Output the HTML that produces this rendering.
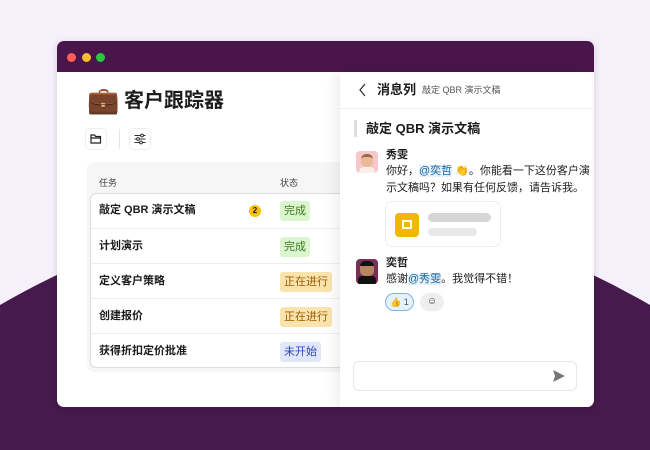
<!DOCTYPE html>
<html><head><meta charset="utf-8"><style>
*{margin:0;padding:0;box-sizing:border-box}
body{width:650px;height:450px;overflow:hidden;background:#f6f0fb;position:relative;font-family:"Liberation Sans","Noto Sans CJK SC",sans-serif;color:#1d1c1d}
.abs{position:absolute}
.win{left:57px;top:41px;width:537px;height:366px;background:#fff;border-radius:7px;overflow:hidden;box-shadow:0 2px 8px rgba(0,0,0,.15)}
.tb{left:0;top:0;width:537px;height:31px;background:#4a154b}
.dot{width:9px;height:9px;border-radius:50%;top:12px}
.row{left:34px;width:266px;height:35px;border-top:1px solid #eee;font-size:11px;font-weight:bold;line-height:35px;padding-left:8px}
.tag{position:absolute;left:189px;top:8px;height:20px;line-height:20px;padding:0 4px;font-size:11px;font-weight:normal;border-radius:3px}
.g{background:#dbf5cf;color:#3c7a1f}.y{background:#fbe3ad;color:#9a5b00}.b{background:#e1e6fb;color:#2f46b8}
.rp{left:283px;top:31px;width:252px;height:335px;background:#fff;box-shadow:-4px 0 14px rgba(0,0,0,.08);border-top-right-radius:6px}
.t{font-size:11px;line-height:17px;color:#1d1c1d;white-space:nowrap}
.m{color:#1264a3;background:#e8f3fb}
</style></head><body>
<svg class="abs" style="left:0;top:0" width="650" height="450"><path d="M0,305 Q325,117 650,305 L650,450 L0,450Z" fill="#461a4c"/></svg>
<div class="abs win">
 <div class="abs tb"></div>
 <div class="abs dot" style="left:10px;background:#ff5f57"></div>
 <div class="abs dot" style="left:25px;background:#febc2e"></div>
 <div class="abs dot" style="left:39px;background:#28c840"></div>
 <div class="abs" style="left:30px;top:44px;font-size:26px;line-height:30px">💼</div>
 <div class="abs" style="left:67px;top:47px;font-size:20px;font-weight:bold;line-height:26px">客户跟踪器</div>
 <div class="abs" style="left:28px;top:87px;width:22px;height:22px;border:1px solid #eee;border-radius:5px"><svg width="20" height="20" viewBox="0 0 20 20"><path d="M5 6h3.5l1.2 1.5h4.8v6.5h-9.5z M5 9h9.5" fill="none" stroke="#222" stroke-width="1.2"/></svg></div>
 <div class="abs" style="left:62px;top:88px;width:1px;height:20px;background:#e5e5e5"></div>
 <div class="abs" style="left:72px;top:87px;width:22px;height:22px;border:1px solid #eee;border-radius:5px"><svg width="20" height="20" viewBox="0 0 20 20"><path d="M4.5 6.5h11M4.5 10h11M4.5 13.5h11" stroke="#333" stroke-width="1"/><circle cx="12" cy="6.5" r="1.4" fill="#fff" stroke="#333"/><circle cx="8" cy="10" r="1.4" fill="#fff" stroke="#333"/><circle cx="11" cy="13.5" r="1.4" fill="#fff" stroke="#333"/></svg></div>
 <div class="abs" style="left:30px;top:121px;width:270px;height:210px;background:#f6f6f6;border-radius:7px"></div>
 <div class="abs" style="left:42px;top:135px;font-size:9px;color:#444">任务</div>
 <div class="abs" style="left:223px;top:135px;font-size:9px;color:#444">状态</div>
 <div class="abs" style="left:33px;top:152px;width:267px;height:175px;background:#fff;border:1px solid #ddd;border-radius:6px"></div>
 <div class="abs row" style="top:152px;border-top:none">敲定 QBR 演示文稿<span style="position:absolute;left:158px;top:12px;width:12px;height:12px;border-radius:50%;background:#f7c300;font-size:8px;line-height:12px;text-align:center">2</span><span class="tag g">完成</span></div>
 <div class="abs row" style="top:187px">计划演示<span class="tag g">完成</span></div>
 <div class="abs row" style="top:222px">定义客户策略<span class="tag y">正在进行</span></div>
 <div class="abs row" style="top:257px">创建报价<span class="tag y">正在进行</span></div>
 <div class="abs row" style="top:292px">获得折扣定价批准<span class="tag b">未开始</span></div>
 <div class="abs rp">
  <svg class="abs" style="left:18px;top:11px" width="10" height="14"><path d="M7 1L2 7l5 6" fill="none" stroke="#333" stroke-width="1.3"/></svg>
  <div class="abs" style="left:37px;top:9px;font-size:13px;font-weight:bold;line-height:18px">消息列</div>
  <div class="abs" style="left:82px;top:12px;font-size:9px;color:#555;line-height:12px">敲定 QBR 演示文稿</div>
  <div class="abs" style="left:0;top:36px;width:252px;height:1px;background:#eee"></div>
  <div class="abs" style="left:14px;top:48px;width:3px;height:17px;background:#ddd"></div>
  <div class="abs" style="left:26px;top:47px;font-size:13px;font-weight:bold;line-height:20px">敲定 QBR 演示文稿</div>
  <div class="abs" style="left:16px;top:79px;width:22px;height:22px;background:#f6c8cc;border-radius:4px;overflow:hidden"><div style="margin:3px 0 0 5px;width:12px;height:13px;background:#e9b99a;border-radius:5px;border-top:3px solid #9a6a4a"></div><div style="margin:0 3px;height:6px;background:#f8f0e8;border-radius:5px 5px 0 0"></div></div>
  <div class="abs t" style="left:46px;top:75px;font-weight:bold">秀雯</div>
  <div class="abs t" style="left:46px;top:91px">你好，<span class="m">@奕哲</span> 👏。你能看一下这份客户演<br>示文稿吗？如果有任何反馈，请告诉我。</div>
  <div class="abs" style="left:45px;top:129px;width:116px;height:46px;border:1px solid #eee;border-radius:7px"></div>
  <div class="abs" style="left:55px;top:141px;width:24px;height:24px;background:#f2b700;border-radius:4px"><div style="margin:7px 0 0 7px;width:10px;height:9px;border:2px solid #fff;background:#f2b700"></div></div>
  <div class="abs" style="left:88px;top:141px;width:63px;height:9px;background:#d6d6d6;border-radius:5px"></div>
  <div class="abs" style="left:88px;top:156px;width:49px;height:8px;background:#e8e8e8;border-radius:4px"></div>
  <div class="abs" style="left:16px;top:187px;width:22px;height:25px;background:#7a2f5a;border-radius:4px;overflow:hidden"><div style="margin:2px 0 0 4px;width:14px;height:15px;background:#b88560;border-radius:5px;border-top:5px solid #111"></div><div style="margin:0 2px;height:8px;background:#111;border-radius:4px 4px 0 0"></div></div>
  <div class="abs t" style="left:46px;top:183px;font-weight:bold">奕哲</div>
  <div class="abs t" style="left:46px;top:199px">感谢<span class="m">@秀雯</span>。我觉得不错！</div>
  <div class="abs" style="left:45px;top:221px;width:29px;height:18px;border:1px solid #7ab6e0;background:#e6f2fb;border-radius:9px;font-size:9px;line-height:16px;padding-left:4px">👍 <span style="color:#555">1</span></div>
  <div class="abs" style="left:80px;top:221px;width:24px;height:18px;background:#eee;border-radius:9px;font-size:10px;line-height:18px;text-align:center;color:#333">☺</div>
  <div class="abs" style="left:13px;top:289px;width:224px;height:30px;border:1px solid #e6e6e6;border-radius:6px"></div>
  <svg class="abs" style="left:212px;top:297px" width="14" height="14"><path d="M1 1L13 7L1 13L3 7Z" fill="#777"/></svg>
 </div>
</div>
</body></html>
